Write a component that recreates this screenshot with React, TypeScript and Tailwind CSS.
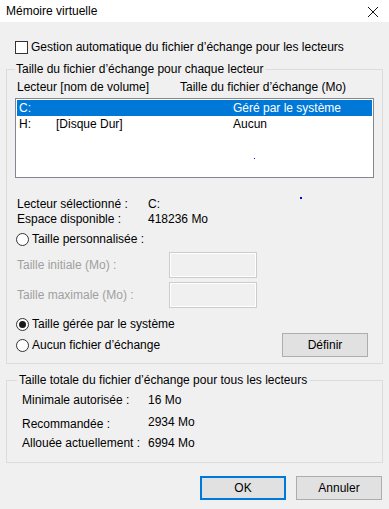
import React from "react";

function Radio({ checked }: { checked?: boolean }) {
  return (
    <span className="w-[13px] h-[13px] rounded-full border border-[#333333] bg-white flex items-center justify-center shrink-0">
      {checked && <span className="w-[7px] h-[7px] rounded-full bg-[#1a1a1a]" />}
    </span>
  );
}

function Btn({ label, primary }: { label: string; primary?: boolean }) {
  return (
    <div
      className={
        "w-[86px] h-[24px] bg-[#e1e1e1] flex items-center justify-center " +
        (primary ? "border-2 border-[#0078d7]" : "border border-[#adadad]")
      }
    >
      {label}
    </div>
  );
}

export default function App() {
  return (
    <div
      className="w-[389px] h-[509px] bg-[#f0f0f0] text-[12px] leading-[16px] text-black overflow-hidden"
      style={{ fontFamily: '"Liberation Sans", Arial, sans-serif' }}
    >
      {/* title bar */}
      <div className="h-[22px] bg-white flex items-center justify-between pl-[6px] pr-[10px]">
        <span className="text-[12px]">Mémoire virtuelle</span>
        <svg width="12" height="12" viewBox="0 0 12 12" className="mt-[1px]">
          <path d="M1 1 L11 11 M11 1 L1 11" stroke="#111" strokeWidth="1" fill="none" />
        </svg>
      </div>

      {/* checkbox */}
      <div className="mt-[17px] h-[16px] flex items-center pl-[15px]">
        <span className="w-[13px] h-[13px] border border-[#333333] bg-white shrink-0" />
        <span className="ml-[3px]">Gestion automatique du fichier d’échange pour les lecteurs</span>
      </div>

      {/* group 1 */}
      <fieldset className="mt-[6px] mx-[6px] border border-[#dcdcdc] px-[8px] pb-[6px] relative">
        <legend className="ml-[0px] px-[1px] h-[16px] leading-[16px]">Taille du fichier d’échange pour chaque lecteur</legend>
        <div className="mt-[2px] h-[16px] flex pl-[2px]">
          <span className="w-[163px]">Lecteur [nom de volume]</span>
          <span>Taille du fichier d’échange (Mo)</span>
        </div>
        <div className="mt-[3px] h-[80px] border border-[#828790] bg-white p-[1px] relative">
          <div className="h-[16px] bg-[#0078d7] text-white flex pl-[2px]">
            <span className="w-[214px]">C:</span>
            <span>Géré par le système</span>
          </div>
          <div className="h-[16px] flex pl-[2px]">
            <span className="w-[37px]">H:</span>
            <span className="w-[177px]">[Disque Dur]</span>
            <span>Aucun</span>
          </div>
          <span className="absolute left-[238px] top-[59px] w-[1px] h-[1px] bg-[#0000ff]" />
        </div>
        <span className="absolute left-[293px] top-[120px] w-[2px] h-[2px] bg-[#0000ff]" />

        <div className="mt-[19px] h-[15px] leading-[15px] flex pl-[2px]">
          <span className="w-[131px]">Lecteur sélectionné :</span>
          <span>C:</span>
        </div>
        <div className="h-[15px] leading-[15px] flex pl-[2px]">
          <span className="w-[131px]">Espace disponible :</span>
          <span>418236 Mo</span>
        </div>
        <div className="mt-[4px] h-[16px] flex items-center pl-[1px]">
          <Radio />
          <span className="ml-[3px]">Taille personnalisée :</span>
        </div>
        <div className="mt-[5px] h-[26px] flex items-center pl-[2px] text-[#a0a0a0]">
          <span className="w-[152px]">Taille initiale (Mo) :</span>
          <span className="w-[88px] h-[26px] border border-[#cccccc] shadow-[inset_0_0_0_1px_#ffffff]" />
        </div>
        <div className="mt-[4px] h-[26px] flex items-center pl-[2px] text-[#a0a0a0]">
          <span className="w-[152px]">Taille maximale (Mo) :</span>
          <span className="w-[88px] h-[26px] border border-[#cccccc] shadow-[inset_0_0_0_1px_#ffffff]" />
        </div>
        <div className="mt-[8px] h-[16px] flex items-center pl-[1px]">
          <Radio checked />
          <span className="ml-[3px]">Taille gérée par le système</span>
        </div>
        <div className="mt-[1px] h-[24px] flex items-center justify-between pl-[1px] pr-[6px]">
          <div className="flex items-center">
            <Radio />
            <span className="ml-[3px]">Aucun fichier d’échange</span>
          </div>
          <Btn label="Définir" />
        </div>
      </fieldset>

      {/* group 2 */}
      <fieldset className="mt-[8px] mx-[6px] border border-[#dcdcdc] px-[8px] pb-[11px]">
        <legend className="ml-[2px] px-[2px] h-[16px] leading-[16px]">Taille totale du fichier d’échange pour tous les lecteurs</legend>
        <div className="mt-[4px] h-[16px] flex pl-[7px]">
          <span className="w-[126px]">Minimale autorisée :</span>
          <span>16 Mo</span>
        </div>
        <div className="mt-[6px] h-[16px] flex items-start pl-[7px]">
          <span className="w-[126px] pt-[2px]">Recommandée :</span>
          <span>2934 Mo</span>
        </div>
        <div className="mt-[5px] h-[16px] flex pl-[7px]">
          <span className="w-[126px]">Allouée actuellement :</span>
          <span>6994 Mo</span>
        </div>
      </fieldset>

      {/* buttons */}
      <div className="mt-[13px] flex justify-end gap-[10px] pr-[7px]">
        <Btn label="OK" primary />
        <Btn label="Annuler" />
      </div>
    </div>
  );
}
